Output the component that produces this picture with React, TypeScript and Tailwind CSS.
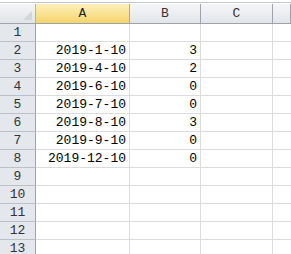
const cols = [
  { name: "A", w: "w-[94px]", selected: true },
  { name: "B", w: "w-[71px]", selected: false },
  { name: "C", w: "w-[72px]", selected: false },
  { name: "", w: "flex-1", selected: false },
]

const rows: [string, string][] = [
  ["", ""],
  ["2019-1-10", "3"],
  ["2019-4-10", "2"],
  ["2019-6-10", "0"],
  ["2019-7-10", "0"],
  ["2019-8-10", "3"],
  ["2019-9-10", "0"],
  ["2019-12-10", "0"],
  ["", ""],
  ["", ""],
  ["", ""],
  ["", ""],
  ["", ""],
]

const App = () => {
  return (
    <div className="w-[291px] h-[254px] overflow-hidden bg-white text-[13px] leading-none text-black" style={{ fontFamily: '"Liberation Mono", "DejaVu Sans Mono", monospace' }}>
      <div className="h-[4px] border-t-[1px] border-t-white">
        <div className="h-[1px] bg-[#c5c9cf] mt-[1px]" />
      </div>
      <div className="flex h-[20px] border-b border-[#9ea3a9]">
        <div className="w-[36px] shrink-0 relative bg-gradient-to-b from-[#f4f5f7] to-[#e1e4e8] border-r border-[#aeb3b9]">
          <div className="absolute right-[3px] bottom-[3px] w-0 h-0 border-l-[9px] border-l-transparent border-b-[9px] border-b-[#d2d5da]" />
        </div>
        {cols.map((c, i) => (
          <div
            key={i}
            className={`${c.w} shrink-0 flex items-center justify-center border-r ${
              c.selected
                ? "bg-gradient-to-b from-[#fcf0b9] to-[#f6d46a] border-[#c2a865] text-[#222]"
                : "bg-gradient-to-b from-[#f5f6f8] to-[#e2e5ea] border-[#9ea3a9] text-[#333]"
            }`}
          >
            {c.name}
          </div>
        ))}
      </div>
      {rows.map(([a, b], i) => (
        <div key={i} className="flex h-[18px]">
          <div className="w-[36px] shrink-0 flex items-center justify-center bg-[#e4e7ec] border-r border-b border-r-[#9ea3a9] border-b-[#bcc1c8] text-[#333]">
            {i + 1}
          </div>
          <div className="w-[94px] shrink-0 flex items-center justify-end pr-[3px] border-r border-b border-[#dadcdd]">{a}</div>
          <div className="w-[71px] shrink-0 flex items-center justify-end pr-[3px] border-r border-b border-[#dadcdd]">{b}</div>
          <div className="w-[72px] shrink-0 border-r border-b border-[#dadcdd]" />
          <div className="flex-1 border-b border-[#dadcdd]" />
        </div>
      ))}
    </div>
  )
}

export default App
